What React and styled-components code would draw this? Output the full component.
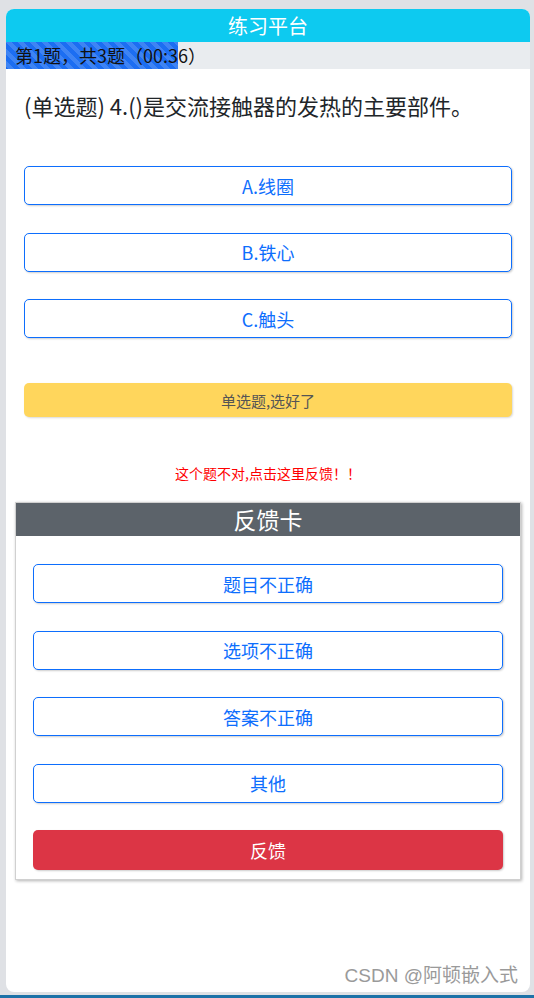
import styled, { createGlobalStyle } from "styled-components"

const GlobalStyle = createGlobalStyle`
    body {
        margin: 0;
        background: #dfe1e5;
        font-family: "Noto Sans CJK SC", "Noto Sans", sans-serif;
    }
`

const options = ["A.线圈", "B.铁心", "C.触头"]
const feedbackOptions = ["题目不正确", "选项不正确", "答案不正确", "其他"]

export default function App() {
    return (
        <Page>
            <GlobalStyle />
            <Frame>
                <Header>练习平台</Header>
                <Progress>
                    <ProgressFill style={{ width: `${(1 / 3) * 100 - 0.6}%` }} />
                    <ProgressLabel>第1题，共3题（00:36）</ProgressLabel>
                </Progress>
                <Body>
                    <Question>(单选题) 4.()是交流接触器的发热的主要部件。</Question>
                    <OptionList>
                        {options.map(opt => (
                            <OutlineButton key={opt}>{opt}</OutlineButton>
                        ))}
                    </OptionList>
                    <SubmitButton>单选题,选好了</SubmitButton>
                    <ReportLink>这个题不对,点击这里反馈！！</ReportLink>
                </Body>
                <Card>
                    <CardHeader>反馈卡</CardHeader>
                    <CardBody>
                        {feedbackOptions.map(opt => (
                            <OutlineButton key={opt}>{opt}</OutlineButton>
                        ))}
                        <DangerButton>反馈</DangerButton>
                    </CardBody>
                </Card>
                <Watermark>CSDN @阿顿嵌入式</Watermark>
            </Frame>
            <BottomStrip />
        </Page>
    )
}

const Page = styled.div`
    display: flex;
    flex-direction: column;
    padding-top: 9px;
    height: 989px;
`

const Frame = styled.div`
    margin-left: 6px;
    width: 524px;
    height: 983px;
    background: #fff;
    border-radius: 8px;
    display: flex;
    flex-direction: column;
    overflow: hidden;
`

const Header = styled.div`
    height: 33px;
    background: #0dcaf0;
    color: #fff;
    font-size: 20px;
    line-height: 33px;
    text-align: center;
`

const Progress = styled.div`
    position: relative;
    height: 27px;
    background: #e9ecef;
`

const ProgressFill = styled.div`
    position: absolute;
    left: 0;
    top: 0;
    bottom: 0;
    background-color: #1c6ef2;
    background-image: linear-gradient(
        45deg,
        rgba(255, 255, 255, 0.15) 25%,
        transparent 25%,
        transparent 50%,
        rgba(255, 255, 255, 0.15) 50%,
        rgba(255, 255, 255, 0.15) 75%,
        transparent 75%,
        transparent
    );
    background-size: 12px 12px;
`

const ProgressLabel = styled.div`
    position: relative;
    padding-left: 9px;
    font-size: 18px;
    line-height: 27px;
    color: #111;
`

const Body = styled.div`
    padding: 0 18px;
    display: flex;
    flex-direction: column;
`

const Question = styled.div`
    margin-top: 21px;
    font-size: 22px;
    line-height: 30px;
    color: #212529;
`

const OptionList = styled.div`
    margin-top: 46px;
    display: flex;
    flex-direction: column;
    gap: 27.5px;
`

const OutlineButton = styled.button`
    height: 39px;
    width: 100%;
    border: 1px solid #0d6efd;
    border-radius: 5px;
    background: #fff;
    color: #0d6efd;
    font-family: inherit;
    font-size: 18px;
    box-shadow: 1px 1px 2px rgba(0, 0, 0, 0.2);
    cursor: pointer;
`

const SubmitButton = styled.button`
    margin-top: 45px;
    height: 34px;
    width: 100%;
    border: none;
    border-radius: 5px;
    background: #ffd65c;
    color: #555;
    font-family: inherit;
    font-size: 15px;
    box-shadow: 1px 1px 2px rgba(0, 0, 0, 0.15);
`

const ReportLink = styled.div`
    margin-top: 46px;
    text-align: center;
    color: #f00;
    font-size: 14px;
    line-height: 20px;
`

const Card = styled.div`
    margin: 19px 9px 0 9px;
    border: 1px solid #d0d0d0;
    box-shadow: 1px 1px 3px rgba(0, 0, 0, 0.3);
    background: #fff;
`

const CardHeader = styled.div`
    height: 33px;
    background: #5c636a;
    color: #fff;
    font-size: 23px;
    line-height: 33px;
    text-align: center;
`

const CardBody = styled.div`
    padding: 28px 17px 9px 17px;
    display: flex;
    flex-direction: column;
    gap: 27.5px;
`

const DangerButton = styled.button`
    height: 40px;
    width: 100%;
    border: none;
    border-radius: 5px;
    background: #dc3545;
    color: #fff;
    font-family: inherit;
    font-size: 18px;
    box-shadow: 1px 1px 2px rgba(0, 0, 0, 0.2);
`

const Watermark = styled.div`
    margin-top: auto;
    margin-bottom: 4px;
    padding-right: 12px;
    text-align: right;
    font-family: "Liberation Sans", "Noto Sans CJK SC", sans-serif;
    font-size: 19px;
    line-height: 24px;
    color: #9a9a9a;
    text-shadow: 0 0 1px rgba(255, 255, 255, 0.8);
`

const BottomStrip = styled.div`
    margin-top: 3px;
    height: 3px;
    background: #1d72a8;
`
